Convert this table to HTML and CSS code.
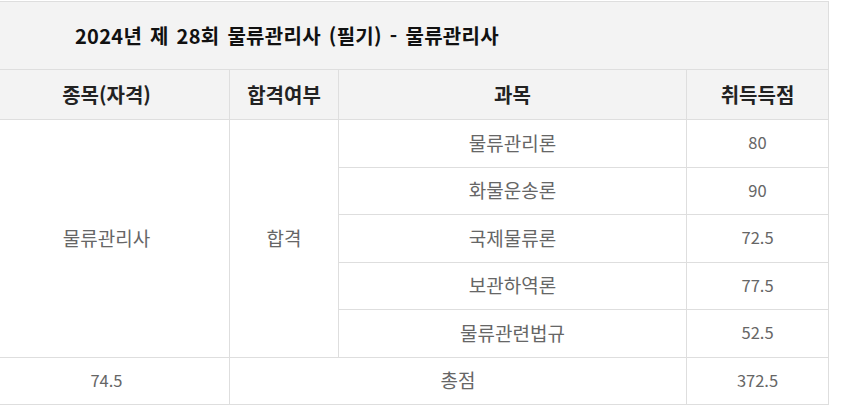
FILE: index.html
```html
<!DOCTYPE html>
<html lang="ko">
<head>
<meta charset="utf-8">
<link rel="stylesheet" href="styles.css">
</head>
<body>
<div class="page">
  <table class="score">
    <colgroup>
      <col class="c1"><col class="c2"><col class="c3"><col class="c4">
    </colgroup>
    <thead>
      <tr><th colspan="4" class="title">2024년 제 28회 물류관리사 (필기) - 물류관리사</th></tr>
      <tr class="head"><th>종목(자격)</th><th>합격여부</th><th>과목</th><th>취득득점</th></tr>
    </thead>
    <tbody>
      <tr><td rowspan="5">물류관리사</td><td rowspan="5">합격</td><td>물류관리론</td><td class="num">80</td></tr>
      <tr><td>화물운송론</td><td class="num">90</td></tr>
      <tr><td>국제물류론</td><td class="num">72.5</td></tr>
      <tr><td>보관하역론</td><td class="num">77.5</td></tr>
      <tr><td>물류관련법규</td><td class="num">52.5</td></tr>
      <tr><td class="num">74.5</td><td colspan="2">총점</td><td class="num">372.5</td></tr>
    </tbody>
  </table>
  <div class="side-bar"><span class="side-blue"></span><span class="side-gray"></span></div>
</div>
</body>
</html>
```
FILE: styles.css
```css
html, body { margin: 0; padding: 0; background: #fff; }
body { font-family: "Noto Sans CJK KR", "Noto Sans", sans-serif; overflow: hidden; }
.page { display: flex; align-items: flex-start; padding-top: 1px; }
.score {
  border-collapse: collapse;
  margin-left: -17px;
  width: 845px;
  table-layout: fixed;
  flex: none;
}
.c1 { width: 246px; }
.c2 { width: 109px; }
.c3 { width: 348px; }
.c4 { width: 142px; }
.score th, .score td {
  border: 1px solid #dedede;
  text-align: center;
  padding: 0;
  line-height: 1.2;
}
.title {
  background: #f3f3f3;
  height: 67px;
  text-align: left !important;
  padding-left: 91px !important;
  font-size: 20px;
  letter-spacing: 0.3px;
  word-spacing: 2px;
  font-weight: 700;
  color: #111;
}
.head th {
  background: #f3f3f3;
  height: 49px;
  font-size: 20px;
  font-weight: 700;
  color: #222;
}
.score td {
  height: 46.5px;
  font-size: 19px;
  color: #666;
}
.score td.num { font-size: 16.5px; }
.side-bar { display: flex; flex-direction: column; margin-left: 12px; margin-top: 42px; }
.side-blue { width: 1px; height: 137px; background: #1f5a8a; }
.side-gray { width: 1px; height: 32px; background: #ddd; }
```
